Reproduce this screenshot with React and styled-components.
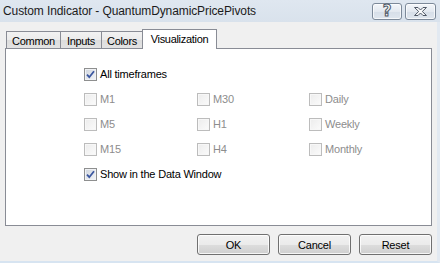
import React from "react";
import styled, { createGlobalStyle } from "styled-components";

const GlobalStyle = createGlobalStyle`
  html, body {
    margin: 0;
    padding: 0;
    background: #f0f0f0;
  }
  body {
    font-family: "Liberation Sans", Arial, sans-serif;
    font-size: 11px;
    color: #000;
  }
`;

const Window = styled.div`
  width: 440px;
  height: 263px;
  box-sizing: border-box;
  display: flex;
  flex-direction: column;
  overflow: hidden;
`;

const TitleBar = styled.div`
  height: 22px;
  flex-shrink: 0;
  display: flex;
  align-items: center;
  padding: 0 4px 0 3px;
  background: linear-gradient(#dfe7f0, #d9e2ec);
`;

const Title = styled.div`
  flex: 1;
  font-size: 12px;
  letter-spacing: -0.1px;
  color: #1b1b1b;
  padding-bottom: 1px;
`;

const CaptionButtons = styled.div`
  display: flex;
  gap: 3px;
  align-self: flex-start;
  margin-top: 3px;
`;

const CaptionButton = styled.div`
  width: ${(p) => p.$w}px;
  height: 17px;
  box-sizing: border-box;
  border: 1px solid #7c8999;
  border-radius: 3px;
  background: linear-gradient(#f3f6fa, #e3e9f0 50%, #d6dee8 51%, #dfe6ee);
  box-shadow: inset 0 0 0 1px rgba(255, 255, 255, 0.7);
  display: flex;
  align-items: center;
  justify-content: center;
`;

const HelpGlyph = styled.span`
  font-family: "DejaVu Sans", sans-serif;
  font-weight: bold;
  font-size: 15px;
  line-height: 1;
  color: #fafbfc;
  -webkit-text-stroke: 1px #4f5866;
`;

const Body = styled.div`
  flex: 1;
  display: flex;
  flex-direction: column;
  padding: 7px 5px 0 5px;
  border-right: 3px solid #e2e9f1;
  border-bottom: 2px solid #d7e4f1;
`;

const TabRow = styled.div`
  display: flex;
  align-items: flex-end;
  height: 20px;
  margin-bottom: -1px;
  padding-left: 1px;
  position: relative;
  z-index: 1;
`;

const Tab = styled.div`
  box-sizing: border-box;
  height: ${(p) => (p.$active ? 20 : 17)}px;
  margin-bottom: ${(p) => (p.$active ? 0 : 1)}px;
  width: ${(p) => p.$w}px;
  margin-right: -1px;
  border: 1px solid #898c95;
  border-bottom: none;
  background: ${(p) =>
    p.$active ? "#fff" : "linear-gradient(#f2f2f2, #ebebeb 50%, #dddddd 51%, #e3e3e3)"};
  display: flex;
  align-items: ${(p) => (p.$active ? "flex-start" : "center")};
  padding-top: ${(p) => (p.$active ? 3 : 1)}px;
  justify-content: center;
  letter-spacing: -0.3px;
  color: #000;
  position: relative;
  z-index: ${(p) => (p.$active ? 2 : 1)};
`;

const Panel = styled.div`
  height: 178px;
  box-sizing: border-box;
  border: 1px solid #898c95;
  background: #fff;
  padding: 19px 0 0 78px;
`;

const OptionGrid = styled.div`
  display: grid;
  grid-template-columns: 113px 112px auto;
  grid-auto-rows: 13px;
  row-gap: 12px;
`;

const Option = styled.label`
  display: flex;
  align-items: center;
  gap: 3px;
  grid-column: ${(p) => (p.$wide ? "1 / -1" : "auto")};
  color: ${(p) => (p.$disabled ? "#8d8d8d" : "#000")};
  line-height: 13px;
  letter-spacing: -0.2px;
  white-space: nowrap;
`;

const Box = styled.span`
  width: 13px;
  height: 13px;
  box-sizing: border-box;
  flex-shrink: 0;
  border: 1px solid ${(p) => (p.$disabled ? "#bcbcbc" : "#8e8f8f")};
  background: ${(p) =>
    p.$disabled
      ? "linear-gradient(135deg, #ececec, #fbfbfb)"
      : "linear-gradient(135deg, #cfd5dd, #f4f6f8)"};
  box-shadow: inset 0 0 0 1px ${(p) => (p.$disabled ? "#f7f7f7" : "#f0f2f5")};
  display: flex;
  align-items: center;
  justify-content: center;
`;

const ButtonRow = styled.div`
  display: flex;
  justify-content: flex-end;
  gap: 8px;
  margin-top: 8px;
`;

const Button = styled.div`
  width: 73px;
  height: 21px;
  box-sizing: border-box;
  border: 1px solid #707070;
  border-radius: 3px;
  background: linear-gradient(#f2f2f2, #ebebeb 50%, #dddddd 51%, #cfcfcf);
  box-shadow: inset 0 0 0 1px rgba(255, 255, 255, 0.8);
  display: flex;
  align-items: center;
  justify-content: center;
  letter-spacing: -0.2px;
`;

const CloseIcon = () => (
  <svg width="15" height="11" viewBox="0 0 15 11">
    <path
      d="M1.5 1.5h3.5l2.5 2.5 2.5-2.5h3.5l-4.2 4 4.2 4h-3.5l-2.5-2.5-2.5 2.5h-3.5l4.2-4z"
      fill="#fafbfc"
      stroke="#4f5866"
      strokeWidth="1"
      strokeLinejoin="round"
    />
  </svg>
);

const CheckMark = () => (
  <svg width="9" height="9" viewBox="0 0 9 9">
    <path d="M1 4.6 L3.3 7.2 L8 1.2" fill="none" stroke="#3b57a0" strokeWidth="1.8" />
  </svg>
);

const CheckOption = ({ label, checked, disabled, wide }) => (
  <Option $disabled={disabled} $wide={wide}>
    <Box $disabled={disabled}>{checked && <CheckMark />}</Box>
    {label}
  </Option>
);

const tabs = [
  { name: "Common", w: 55 },
  { name: "Inputs", w: 42 },
  { name: "Colors", w: 42 },
  { name: "Visualization", w: 75, active: true },
];

const timeframes = ["M1", "M30", "Daily", "M5", "H1", "Weekly", "M15", "H4", "Monthly"];

export default function App() {
  return (
    <Window>
      <GlobalStyle />
      <TitleBar>
        <Title>Custom Indicator - QuantumDynamicPricePivots</Title>
        <CaptionButtons>
          <CaptionButton $w={30}>
            <HelpGlyph>?</HelpGlyph>
          </CaptionButton>
          <CaptionButton $w={31}>
            <CloseIcon />
          </CaptionButton>
        </CaptionButtons>
      </TitleBar>
      <Body>
        <TabRow>
          {tabs.map((t) => (
            <Tab key={t.name} $w={t.w} $active={t.active}>
              {t.name}
            </Tab>
          ))}
        </TabRow>
        <Panel>
          <OptionGrid>
            <CheckOption label="All timeframes" checked wide />
            {timeframes.map((tf) => (
              <CheckOption key={tf} label={tf} disabled />
            ))}
            <CheckOption label="Show in the Data Window" checked wide />
          </OptionGrid>
        </Panel>
        <ButtonRow>
          <Button>OK</Button>
          <Button>Cancel</Button>
          <Button>Reset</Button>
        </ButtonRow>
      </Body>
    </Window>
  );
}
